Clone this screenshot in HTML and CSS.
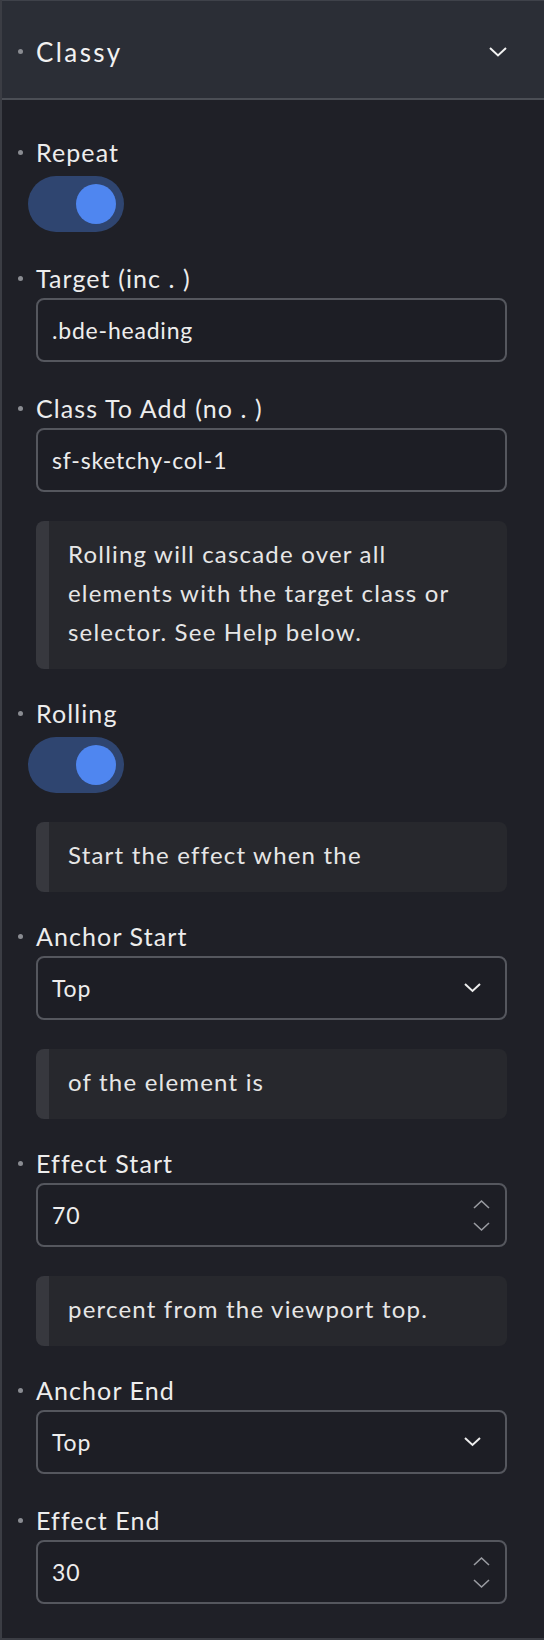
FILE: index.html
```html
<!DOCTYPE html>
<html lang="en">
<head>
  <meta charset="UTF-8">
  <meta name="viewport" content="width=device-width, initial-scale=1.0">
  <title>Classy</title>
  <link rel="stylesheet" href="styles.css">
</head>
<body>

  <div class="panel">

    <!-- 헤더 -->
    <div class="panel_head">
      <span class="dot"></span>
      <span class="head_title">Classy</span>
      <svg class="head_chevron" width="18" height="10" viewBox="0 0 18 10"><path d="M1 1l8 7.5 8-7.5" fill="none" stroke="#f2f2f2" stroke-width="2"/></svg>
    </div>

    <!-- 본문 -->
    <div class="panel_body">

      <div class="field">
        <div class="field_label"><span class="dot"></span>Repeat</div>
        <div class="toggle"><span class="knob"></span></div>
      </div>

      <div class="field">
        <div class="field_label"><span class="dot"></span>Target (inc . )</div>
        <div class="input">.bde-heading</div>
      </div>

      <div class="field">
        <div class="field_label"><span class="dot"></span>Class To Add (no . )</div>
        <div class="input">sf-sketchy-col-1</div>
      </div>

      <div class="note">Rolling will cascade over all<br>elements with the target class or<br>selector. See Help below.</div>

      <div class="field">
        <div class="field_label"><span class="dot"></span>Rolling</div>
        <div class="toggle"><span class="knob"></span></div>
      </div>

      <div class="note">Start the effect when the</div>

      <div class="field">
        <div class="field_label"><span class="dot"></span>Anchor Start</div>
        <div class="input select">Top
          <svg width="17" height="10" viewBox="0 0 17 10"><path d="M1 1l7.5 7 7.5-7" fill="none" stroke="#ececec" stroke-width="2"/></svg>
        </div>
      </div>

      <div class="note">of the element is</div>

      <div class="field">
        <div class="field_label"><span class="dot"></span>Effect Start</div>
        <div class="input number">70
          <span class="spin">
            <svg width="17" height="10" viewBox="0 0 17 10"><path d="M1 9l7.5-7 7.5 7" fill="none" stroke="#9a9ca2" stroke-width="1.6"/></svg>
            <svg width="17" height="10" viewBox="0 0 17 10"><path d="M1 1l7.5 7 7.5-7" fill="none" stroke="#9a9ca2" stroke-width="1.6"/></svg>
          </span>
        </div>
      </div>

      <div class="note">percent from the viewport top.</div>

      <div class="field">
        <div class="field_label"><span class="dot"></span>Anchor End</div>
        <div class="input select">Top
          <svg width="17" height="10" viewBox="0 0 17 10"><path d="M1 1l7.5 7 7.5-7" fill="none" stroke="#ececec" stroke-width="2"/></svg>
        </div>
      </div>

      <div class="field">
        <div class="field_label"><span class="dot"></span>Effect End</div>
        <div class="input number">30
          <span class="spin">
            <svg width="17" height="10" viewBox="0 0 17 10"><path d="M1 9l7.5-7 7.5 7" fill="none" stroke="#9a9ca2" stroke-width="1.6"/></svg>
            <svg width="17" height="10" viewBox="0 0 17 10"><path d="M1 1l7.5 7 7.5-7" fill="none" stroke="#9a9ca2" stroke-width="1.6"/></svg>
          </span>
        </div>
      </div>

    </div>
  </div>

</body>
</html>
```

FILE: styles.css
```css
:root {
    --bg: #1f2027;
    --head: #2b2e36;
    --line: #4b4e55;
    --edge: #3b3d44;
    --field-border: #55575e;
    --txt: #ededed;
    --note: #27282d;
    --note-bar: #37383e;
    --dot: #8a8c92;
    --blue: #4f86f0;
    --track: #2f4570;
}

* {box-sizing: border-box;}
body {margin: 0; background: var(--bg); color: var(--txt); font-family: Lato, "Noto Sans", sans-serif;}

.panel {width: 544px; height: 1640px; border-left: 2px solid var(--edge); border-bottom: 2px solid var(--edge); background: var(--bg);}

/* header */
.panel_head {height: 100px; display: flex; align-items: center; gap: 13px; padding: 4px 37px 0 16px; background: var(--head); border-top: 1px solid #3f424a; border-bottom: 2px solid var(--line);}
.head_title {font-size: 26px; letter-spacing: 2.4px; color: #f2f2f2;}
.head_chevron {margin-left: auto;}

.dot {width: 5px; height: 5px; border-radius: 50%; background: var(--dot); flex: none;}

/* body */
.panel_body {padding: 35px 37px 0 34px;}
.field {margin-bottom: 29px;}
.field_label {display: flex; align-items: center; gap: 13px; margin-left: -18px; height: 34px; font-size: 25px; line-height: 34px; letter-spacing: 1.1px;}

/* toggle */
.toggle {width: 96px; height: 56px; margin: 7px 0 0 -8px; padding: 8px; border-radius: 28px; background: var(--track); display: flex; justify-content: flex-end;}
.knob {width: 40px; height: 40px; border-radius: 50%; background: var(--blue);}

/* inputs */
.input {height: 64px; margin-top: 3px; padding: 0 15px 0 14px; display: flex; align-items: center; justify-content: space-between; border: 2px solid var(--field-border); border-radius: 8px; background: #1d1e25; font-size: 23px; letter-spacing: 0.8px;}
.input.select {padding-right: 24px;}
.spin {display: flex; flex-direction: column; gap: 13px;}
.spin svg {display: block;}

/* note */
.note {margin-bottom: 27px; padding: 13px 20px 18px 19px; border-left: 13px solid var(--note-bar); border-radius: 8px; background: var(--note); font-size: 24px; line-height: 39px; letter-spacing: 1.2px; color: #e6e6e6;}
```
